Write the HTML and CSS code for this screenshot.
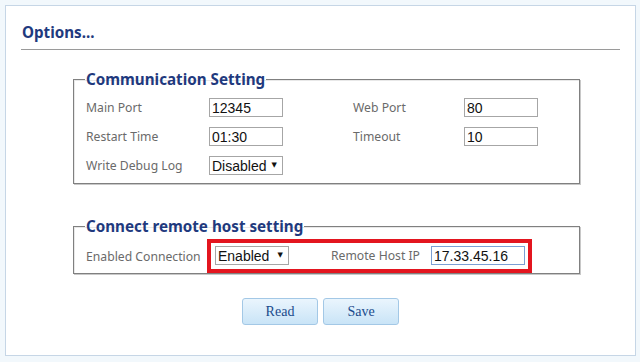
FILE: index.html
```html
<!DOCTYPE html>
<html lang="en">
<head>
  <meta charset="UTF-8">
  <meta name="viewport" content="width=device-width, initial-scale=1.0">
  <title>Options</title>
<link rel="stylesheet" href="styles.css">
</head>
<body>
  <div class="panel">
    <h1 class="title">Options...</h1>
    <hr class="rule">

    <fieldset class="group">
      <legend>Communication Setting</legend>
      <div class="grid">
        <label class="label">Main Port</label>
        <input class="field" type="text" value="12345">
        <label class="label">Web Port</label>
        <input class="field" type="text" value="80">

        <label class="label">Restart Time</label>
        <input class="field" type="text" value="01:30">
        <label class="label">Timeout</label>
        <input class="field" type="text" value="10">

        <label class="label">Write Debug Log</label>
        <span class="select">
          <select>
            <option>Disabled</option>
            <option>Enabled</option>
          </select>
        </span>
      </div>
    </fieldset>

    <fieldset class="group remote">
      <legend>Connect remote host setting</legend>
      <div class="row">
        <label class="label wide">Enabled Connection</label>
        <div class="highlight">
          <span class="select">
            <select>
              <option>Enabled</option>
              <option>Disabled</option>
            </select>
          </span>
          <label class="label ip">Remote Host IP</label>
          <input class="field focus" type="text" value="17.33.45.16">
        </div>
      </div>
    </fieldset>

    <div class="actions">
      <button class="btn">Read</button>
      <button class="btn">Save</button>
    </div>
  </div>
</body>
</html>
```

FILE: styles.css
```css
* {
  margin: 0;
  padding: 0;
  box-sizing: border-box;
}
body {
  background-color: #f2f8fc;
  font-family: "Noto Sans", "Open Sans", sans-serif;
  padding: 5px;
}
.panel {
  width: 631px;
  height: 351px;
  background: white;
  border: 1px solid #c6d6e6;
  padding: 16px 15px 0 15px;
}
.title {
  font-size: 15.2px;
  line-height: 20px;
  font-weight: bold;
  color: #1f3a7e;
  padding-left: 1px;
}
.rule {
  border: none;
  border-top: 1px solid #9a9a9a;
  margin-top: 7px;
}
.group {
  width: 507px;
  margin: 19px 0 0 52px;
  border: 1px solid #808080;
  box-shadow: 1px 1px 0 #c8c8c8, inset 1px 1px 0 #e8e8e8;
  padding: 9px 12px 8px 12px;
  min-width: 0;
}
.group legend {
  font-size: 15.2px;
  line-height: 20px;
  font-weight: bold;
  color: #1f3a7e;
  padding: 0 1px;
  margin-left: -1px;
}
.grid {
  display: grid;
  grid-template-columns: 123px 74px 70px 111px 74px;
  row-gap: 10px;
  align-items: center;
}
.grid .label:nth-child(3),
.grid .label:nth-child(7) {
  grid-column: 4;
}
.label {
  font-size: 12.2px;
  color: #6a6a6a;
  line-height: 19px;
}
.field {
  width: 74px;
  height: 19px;
  border: 1px solid #a6a6a6;
  font-family: "Liberation Sans", Arial, sans-serif;
  font-size: 14px;
  color: #111;
  padding: 0 2px;
  outline: none;
}
.select {
  position: relative;
  display: block;
  width: 74px;
  height: 19px;
}
.select select {
  appearance: none;
  -webkit-appearance: none;
  display: block;
  width: 100%;
  height: 100%;
  border: 1px solid #a6a6a6;
  border-radius: 0;
  background: white;
  font-family: "Liberation Sans", Arial, sans-serif;
  font-size: 14px;
  color: #111;
  padding: 0 2px;
}
.select::after {
  content: "\25BC";
  position: absolute;
  right: 6px;
  top: 6px;
  font-family: "DejaVu Sans", sans-serif;
  font-size: 7px;
  line-height: 7px;
  color: #111;
  pointer-events: none;
}
.remote {
  margin-top: 32px;
  padding: 3px 12px 0 12px;
}
.row {
  display: flex;
  align-items: center;
}
.wide {
  width: 121px;
}
.highlight {
  display: flex;
  align-items: center;
  width: 325px;
  border: 4px solid #e3151f;
  padding: 3px 3px 4px 4px;
}
.ip {
  margin-left: 42px;
  width: 100px;
}
.focus {
  width: 94px;
  border-color: #7b9fd4;
}
.actions {
  display: flex;
  justify-content: center;
  gap: 5px;
  margin-top: 24px;
}
.btn {
  width: 76px;
  height: 27px;
  border: 1px solid #a3c8e6;
  border-radius: 3px;
  background: linear-gradient(#eaf5fd, #c9e4f7);
  font-family: "Liberation Serif", serif;
  font-size: 14px;
  color: #1b4b8c;
  cursor: pointer;
}
```
